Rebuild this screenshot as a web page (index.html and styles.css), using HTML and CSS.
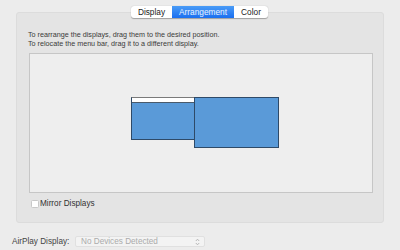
FILE: index.html
```html
<!DOCTYPE html>
<html>
<head>
<meta charset="utf-8">
<link rel="stylesheet" href="styles.css">
</head>
<body>
<div class="window">
  <div class="tabs">
    <div class="tab">Display</div>
    <div class="tab active">Arrangement</div>
    <div class="tab">Color</div>
  </div>
  <div class="group">
    <div class="hint">
      <div>To rearrange the displays, drag them to the desired position.</div>
      <div>To relocate the menu bar, drag it to a different display.</div>
    </div>
    <div class="canvas">
      <div class="screen screen-main"><div class="menubar"></div></div>
      <div class="screen screen-second"></div>
    </div>
    <label class="mirror"><span class="checkbox"></span><span>Mirror Displays</span></label>
  </div>
  <div class="airplay">
    <span class="airplay-label">AirPlay Display:</span>
    <div class="popup"><span>No Devices Detected</span><svg class="arrows" width="5" height="8" viewBox="0 0 5 8"><path d="M0.8 3 L2.5 1.2 L4.2 3 M0.8 5 L2.5 6.8 L4.2 5" fill="none" stroke="#b0b0b0" stroke-width="0.9"/></svg></div>
  </div>
</div>
</body>
</html>
```
FILE: styles.css
```css
html, body {
  margin: 0;
  padding: 0;
}
body {
  width: 400px;
  height: 250px;
  overflow: hidden;
  background: #ececec;
  font-family: "Liberation Sans", Arial, sans-serif;
  color: #333;
}
.window {
  display: flex;
  flex-direction: column;
  padding-top: 6px;
}
.tabs {
  display: flex;
  align-self: center;
  margin-left: -1px;
  position: relative;
  z-index: 1;
  margin-bottom: -6px;
  height: 12px;
  border-radius: 3px;
  background: #fff;
  box-shadow: 0 0.5px 1px rgba(0,0,0,0.3);
}
.tab {
  font-size: 8.3px;
  line-height: 12px;
  color: #222;
  padding: 0 6px;
}
.tab:first-child { width: 29px; padding: 0 6px; text-align: center; }
.tab.active {
  background: linear-gradient(#4a9cf7, #1a6ff0);
  color: #e8f1ff;
  width: 50px;
  text-align: center;
}
.tab:last-child { width: 22px; text-align: center; }
.group {
  margin: 0 16px;
  height: 211px;
  box-sizing: border-box;
  background: #e4e4e4;
  border: 1px solid #dcdcdc;
  border-radius: 3px;
  padding: 17px 10px 0 11px;
  display: flex;
  flex-direction: column;
}
.hint {
  font-size: 7.2px;
  line-height: 9px;
  color: #3a3a3a;
}
.canvas {
  margin-top: 5px;
  margin-left: 1px;
  height: 140px;
  box-sizing: border-box;
  background: #eeeeee;
  border: 1px solid #c6c6c6;
  position: relative;
}
.screen {
  position: absolute;
  box-sizing: border-box;
  background: #5a9ad8;
  border: 1px solid #2e4a68;
}
.screen-main {
  left: 101px;
  top: 43px;
  width: 64px;
  height: 43px;
  border-top-color: #7a7a7a;
}
.menubar {
  height: 4px;
  background: #fff;
  border-bottom: 1px solid #4a5a6a;
}
.screen-second {
  left: 164px;
  top: 43px;
  width: 85px;
  height: 51px;
}
.mirror {
  display: flex;
  align-items: center;
  margin-top: 6px;
  margin-left: 3px;
  font-size: 8.2px;
  color: #333;
}
.checkbox {
  width: 8px;
  height: 8px;
  box-sizing: border-box;
  background: #fff;
  border: 1px solid #c8c8c8;
  border-radius: 1.5px;
  margin-right: 1px;
}
.airplay {
  display: flex;
  align-items: center;
  padding-left: 12px;
  margin-top: 13px;
  font-size: 8.2px;
}
.airplay-label {
  color: #444;
  width: 63px;
}
.popup {
  width: 130px;
  height: 11px;
  box-sizing: border-box;
  background: #f3f3f3;
  border: 1px solid #e0e0e0;
  border-radius: 2px;
  display: flex;
  align-items: center;
  justify-content: space-between;
  padding: 0 4px 0 5px;
  color: #ababab;
}
.arrows { display: block; }
```
